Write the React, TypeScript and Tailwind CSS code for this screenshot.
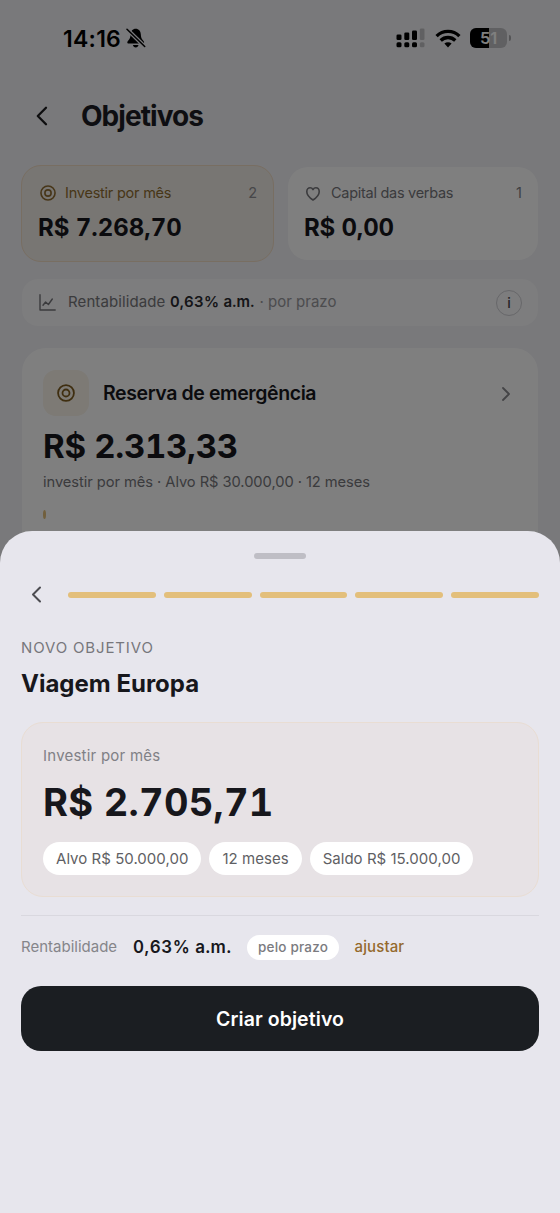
import type { ReactNode } from "react";

function TargetIcon({ className }: { className: string }) {
  return (
    <svg viewBox="0 0 20 20" fill="none" stroke="currentColor" strokeWidth="2" className={className}>
      <circle cx="10" cy="10" r="8.800" />
      <circle cx="10" cy="10" r="3.900" />
    </svg>
  );
}

function BellOffIcon() {
  return (
    <svg viewBox="0 0 20 20" className="h-5 w-5 shrink-0" fill="currentColor">
      <path d="M9.700.700c-3 0-5 2.300-5.100 5.600-.1 3.100-.8 4.600-2.300 6.300-.7.800-1 1.300-1 1.900 0 .7.500 1.100 1.300 1.100h14.200c.8 0 1.300-.4 1.300-1.100 0-.6-.3-1.100-1-1.900-1.500-1.700-2.200-3.200-2.300-6.300C14.700 3 12.700.7 9.700.7Z" />
      <path d="M6.900 17h5.600c-.3 1.500-1.400 2.400-2.800 2.400S7.200 18.500 6.900 17Z" />
      <path d="M1 1.200 18.700 18.500" stroke="#f2f2f6" strokeWidth="4" />
      <path d="M1 1.200 18.700 18.500" stroke="currentColor" strokeWidth="1.500" strokeLinecap="round" />
    </svg>
  );
}

function SignalIcon() {
  return (
    <svg viewBox="0 0 29 20" className="h-5 w-[29px]" fill="currentColor">
      <rect x="0.500" y="6.500" width="5" height="5.500" rx="1.300" />
      <rect x="8.300" y="4.500" width="5" height="7.500" rx="1.300" />
      <rect x="16" y="2.500" width="5" height="9.500" rx="1.300" />
      <rect x="23.800" y="0.500" width="4.700" height="11.500" rx="1.300" opacity="0.2" />
      <rect x="0.500" y="14.300" width="5" height="5" rx="1.500" />
      <rect x="8.300" y="14.300" width="5" height="5" rx="1.500" />
      <rect x="16" y="14.300" width="5" height="5" rx="1.500" />
      <rect x="23.800" y="14.300" width="4.700" height="5" rx="1.500" opacity="0.2" />
    </svg>
  );
}

function WifiIcon() {
  return (
    <svg viewBox="0 0 26 19" className="h-[19px] w-[26px]" fill="none" stroke="currentColor" strokeWidth="3.300">
      <path d="M1.600 7.100a16.200 16.200 0 0 1 22.800 0" />
      <path d="M5.700 11.500a10.400 10.400 0 0 1 14.600 0" />
      <path d="M9.400 14.600a5.300 5.300 0 0 1 7.200 0L13 18.400Z" fill="currentColor" stroke="none" />
    </svg>
  );
}

function Battery() {
  return (
    <div className="flex items-center gap-[2px]">
      <div className="relative flex h-5 w-[37px] items-center justify-center overflow-hidden rounded-[6px] bg-black/20">
        <div className="absolute inset-y-0 left-0 w-[18.500px] bg-black" />
        <span className="relative text-[16.500px] leading-5 font-semibold tracking-[-0.300px] text-white">51</span>
      </div>
      <div className="h-[6px] w-[2px] rounded-r-full bg-black/30" />
    </div>
  );
}

function ChartIcon() {
  return (
    <svg viewBox="0 0 17 17" className="h-[17px] w-[17px]" fill="none" stroke="currentColor" strokeWidth="1.400" strokeLinecap="round" strokeLinejoin="round">
      <path d="M1 .8V16h15.200" />
      <path d="M4 11.300 6.600 8l2.800 2.500L13.300 5" />
    </svg>
  );
}

function HeartIcon() {
  return (
    <svg viewBox="0 0 16 16" className="mt-[2px] ml-[1px] h-4 w-4" fill="none" stroke="currentColor" strokeWidth="1.600" strokeLinejoin="round">
      <path d="M8 14C5 12 1.800 9.200 1.800 5.700c0-2.400 1.500-3.900 3.300-3.900 1.300 0 2.300.7 2.900 1.800.6-1.100 1.600-1.800 2.900-1.800 1.800 0 3.300 1.500 3.300 3.900C14.200 9.200 11 12 8 14Z" />
    </svg>
  );
}

function Pill({ children }: { children: ReactNode }) {
  return (
    <span className="flex h-[33px] items-center rounded-full bg-white px-[13px] text-[15px] leading-5 tracking-[0.030px] whitespace-nowrap text-[#5f5f64]">
      {children}
    </span>
  );
}

function StatusBar() {
  return (
    <div className="flex h-[76px] items-center pr-[49px] pl-[63px] text-black">
      <span className="mt-px w-[63px] text-[23px] leading-6 font-semibold tracking-[0.250px]">14:16</span>
      <BellOffIcon />
      <div className="ml-auto flex items-center">
        <SignalIcon />
        <div className="ml-[10px]">
          <WifiIcon />
        </div>
        <div className="ml-[9px]">
          <Battery />
        </div>
      </div>
    </div>
  );
}

function GoalsPage() {
  return (
    <div className="h-full">
      <StatusBar />
      <header className="flex h-20 items-center pl-[36px]">
        <svg viewBox="0 0 12 20" className="h-5 w-3 text-[#1c1c1e]" fill="none" stroke="currentColor" strokeWidth="2.300" strokeLinecap="round" strokeLinejoin="round">
          <path d="M10 1.800 1.800 10l8.200 8.200" />
        </svg>
        <h1 className="ml-[33px] text-[28px] leading-8 font-bold tracking-[-0.950px] text-[#1c1c24]">Objetivos</h1>
      </header>
      <div className="flex items-center gap-[14px] pt-[9px] pr-[22px] pl-[21px]">
        <div className="h-[97px] w-[253px] rounded-[20px] border-[1.500px] border-[#f0dcc4] bg-[#f1ece6] px-4 pt-[17px]">
          <div className="flex h-[20px] items-center text-[#8f6c30]">
            <TargetIcon className="ml-[2px] h-[16px] w-[16px]" />
            <span className="ml-[9px] text-[14.500px] leading-5 tracking-[-0.230px]">Investir por mês</span>
            <span className="ml-auto text-[14.500px] leading-5 text-[#8e8e93]">2</span>
          </div>
          <p className="mt-[9px] text-[24px] leading-8 font-bold tracking-[-0.020px] tabular-nums text-[#17171c]">R$ 7.268,70</p>
        </div>
        <div className="h-[93px] flex-1 rounded-[20px] bg-white px-4 pt-4">
          <div className="flex h-[20px] items-center text-[#76767b]">
            <HeartIcon />
            <span className="ml-[10px] text-[14.500px] leading-5 tracking-[-0.280px]">Capital das verbas</span>
            <span className="ml-auto text-[14.500px] leading-5 text-[#808085]">1</span>
          </div>
          <p className="mt-[9px] text-[24px] leading-8 font-bold tracking-[-0.150px] tabular-nums text-[#17171c]">R$ 0,00</p>
        </div>
      </div>
      <div className="mx-[22px] mt-[17px] flex h-[47px] items-center rounded-[16px] bg-[#fafafc] pr-4 pl-[17px] text-[15px] leading-5 whitespace-nowrap text-[#76767b]">
        <ChartIcon />
        <span className="-mt-px ml-[12px] tracking-[0.100px]">Rentabilidade</span>
        <span className="-mt-px ml-[4.500px] font-semibold tracking-[0.220px] tabular-nums text-[#2b2b30]">0,63% a.m.</span>
        <span className="-mt-px ml-[5px] text-[#98989d]">· por prazo</span>
        <span className="ml-auto flex h-[26px] w-[26px] items-center justify-center rounded-full border-[1.500px] border-[#cfcfd4] text-[14px] font-medium text-[#4b4b50]">i</span>
      </div>
      <div className="mx-[22px] mt-[22px] h-[240px] rounded-[24px] bg-white px-[21px] pt-[22px]">
        <div className="flex h-[46px] items-center">
          <div className="flex h-[46px] w-[46px] items-center justify-center rounded-[13px] bg-[#faf4ea] text-[#7f5d20]">
            <TargetIcon className="h-[18px] w-[18px]" />
          </div>
          <h2 className="ml-[14px] text-[19.500px] leading-6 font-semibold tracking-[-0.400px] text-[#17171c]">Reserva de emergência</h2>
          <svg viewBox="0 0 10 16" className="mt-[2px] mr-[6px] ml-auto h-4 w-[10px] text-[#88888d]" fill="none" stroke="currentColor" strokeWidth="1.800" strokeLinecap="round" strokeLinejoin="round">
            <path d="m2 2 6 6-6 6" />
          </svg>
        </div>
        <p className="mt-[10px] text-[33px] leading-10 font-bold tracking-[-0.280px] tabular-nums text-[#17171c]">R$ 2.313,33</p>
        <p className="mt-[6px] text-[14.700px] leading-5 tracking-[-0.060px] text-[#76767b]">investir por mês · Alvo R$ 30.000,00 · 12 meses</p>
        <div className="mt-[18px] h-[9px] w-[3px] rounded-[50%] bg-[#e3bf7b]" />
      </div>
    </div>
  );
}

const STEPS = [1, 2, 3, 4, 5];

function NewGoalSheet() {
  return (
    <div className="absolute inset-x-0 top-[531px] bottom-0 rounded-t-[32px] bg-[#e7e6ed] px-[21px]">
      <div className="flex h-[49px] justify-center pt-[22px]">
        <div className="h-[5.500px] w-[52px] rounded-full bg-[#bfbec5]" />
      </div>
      <div className="flex h-[29px] items-center">
        <svg viewBox="0 0 11 17" className="ml-[10px] h-[17px] w-[11px] shrink-0 text-[#4c4c51]" fill="none" stroke="currentColor" strokeWidth="2" strokeLinecap="round" strokeLinejoin="round">
          <path d="M9 1.500 2 8.500 9 15.500" />
        </svg>
        <div className="ml-[26px] flex flex-1 gap-2">
          {STEPS.map((step) => (
            <div key={step} className="h-[6px] flex-1 rounded-full bg-[#e3bf7b]" />
          ))}
        </div>
      </div>
      <p className="mt-[29px] text-[15px] leading-5 tracking-[0.850px] text-[#77777c]">NOVO OBJETIVO</p>
      <h2 className="mt-[10px] text-[24px] leading-8 font-bold text-[#17171c]">Viagem Europa</h2>
      <section className="mt-[22px] h-[175px] rounded-[22px] border-[1.500px] border-[#e9ddd3] bg-[#e7e2e5] px-[21px] pt-[23px]">
        <p className="text-[15px] leading-5 tracking-[0.230px] text-[#808085]">Investir por mês</p>
        <p className="mt-[13px] text-[38px] leading-[46px] font-bold tracking-[0.250px] tabular-nums text-[#17171c]">R$ 2.705,71</p>
        <div className="mt-[17px] flex gap-2">
          <Pill>Alvo R$ 50.000,00</Pill>
          <Pill>12 meses</Pill>
          <Pill>Saldo R$ 15.000,00</Pill>
        </div>
      </section>
      <div className="mt-[17.500px] border-t-[1.500px] border-[#d9d8df]" />
      <div className="mt-[18.500px] flex h-[26px] items-center whitespace-nowrap">
        <span className="text-[15px] leading-5 text-[#85858a]">Rentabilidade</span>
        <span className="ml-[16px] text-[17px] leading-6 font-semibold tracking-[0.500px] tabular-nums text-[#17171c]">0,63% a.m.</span>
        <span className="ml-[16px] flex h-[25px] items-center rounded-full bg-white px-[10.500px] text-[13.500px] leading-5 font-medium tracking-[0.200px] text-[#7b7b80]">pelo prazo</span>
        <span className="ml-[16px] text-[15px] leading-5 font-medium tracking-[0.100px] text-[#94692c]">ajustar</span>
      </div>
      <button className="mt-[26px] flex h-[65px] w-full items-center justify-center rounded-[20px] bg-[#1b1e22] text-[19.500px] leading-6 font-semibold tracking-[0.080px] text-white">
        Criar objetivo
      </button>
    </div>
  );
}

export default function App() {
  return (
    <div className="relative h-[1213px] w-[560px] overflow-hidden bg-[#f2f2f6] font-['Inter','Liberation_Sans',sans-serif]">
      <GoalsPage />
      <div className="absolute inset-0 bg-black/50" />
      <NewGoalSheet />
    </div>
  );
}
